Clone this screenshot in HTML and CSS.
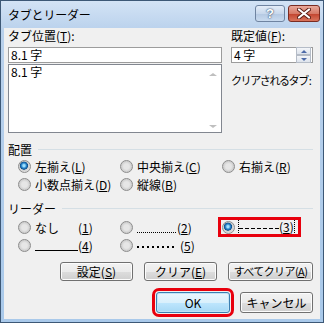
FILE: index.html
```html
<!DOCTYPE html>
<html lang="ja">
<head>
    <meta charset="UTF-8">
    <title>タブとリーダー</title>
    <link rel="stylesheet" href="styles.css">
</head>
<body>
    <div class="window">
        <div class="titlebar">
            <span class="title">タブとリーダー</span>
            <div class="caption-buttons">
                <span class="cap-btn help">?</span>
                <span class="cap-btn close">
                    <svg width="14" height="11" viewBox="0 0 14 11">
                        <path d="M2 1.5 L12 9.5 M12 1.5 L2 9.5" stroke="#5a1d14" stroke-width="4" stroke-linecap="round"/>
                        <path d="M2 1.5 L12 9.5 M12 1.5 L2 9.5" stroke="#fff" stroke-width="2.2" stroke-linecap="round"/>
                    </svg>
                </span>
            </div>
        </div>
        <div class="client">
            <div class="top">
                <div class="tab-col">
                    <div class="label">タブ位置(<u>T</u>):</div>
                    <div class="textbox">8.1 字</div>
                    <div class="listbox">
                        <div class="list-item">8.1 字</div>
                        <div class="scrollbar">
                            <span class="sarrow up"></span>
                            <span class="sarrow down"></span>
                        </div>
                    </div>
                </div>
                <div class="side-col">
                    <div class="label">既定値(<u>F</u>):</div>
                    <div class="textbox spin">
                        <span>4&nbsp;字</span>
                        <span class="spin-btns">
                            <span class="spin-btn"><span class="tri up"></span></span>
                            <span class="spin-btn"><span class="tri down"></span></span>
                        </span>
                    </div>
                    <div class="clear-label">クリアされるタブ :</div>
                </div>
            </div>

            <div class="group-head"><span>配置</span></div>
            <div class="radio-grid">
                <div class="opt"><span class="radio on"></span><span>左揃え(<u>L</u>)</span></div>
                <div class="opt"><span class="radio"></span><span>中央揃え(<u>C</u>)</span></div>
                <div class="opt"><span class="radio"></span><span>右揃え(<u>R</u>)</span></div>
                <div class="opt"><span class="radio"></span><span>小数点揃え(<u>D</u>)</span></div>
                <div class="opt"><span class="radio"></span><span>縦線(<u>B</u>)</span></div>
            </div>

            <div class="group-head leader-head"><span>リーダー</span></div>
            <div class="radio-grid">
                <div class="opt"><span class="radio"></span><span>なし<span class="lead blank"></span>(<u>1</u>)</span></div>
                <div class="opt"><span class="radio"></span><span><span class="lead dots"></span>(<u>2</u>)</span></div>
                <div class="opt marked"><span class="radio on"></span><span class="focus"><span class="lead dashes"></span>(<u>3</u>)</span></div>
                <div class="opt"><span class="radio"></span><span><span class="lead line"></span>(<u>4</u>)</span></div>
                <div class="opt"><span class="radio"></span><span><span class="lead bold-dots"></span>(<u>5</u>)</span></div>
            </div>

            <div class="btn-row">
                <button class="btn">設定(<u>S</u>)</button>
                <button class="btn">クリア(<u>E</u>)</button>
                <button class="btn wide">すべてクリア(<u>A</u>)</button>
            </div>
            <div class="btn-row ok-row">
                <button class="btn default">OK</button>
                <button class="btn">キャンセル</button>
            </div>
        </div>
    </div>
</body>
</html>
```

FILE: styles.css
```css
body {
    margin: 0;
    font-family: "Noto Sans CJK JP", "Liberation Sans", sans-serif;
    font-size: 12px;
    color: #000;
    white-space: nowrap;
}
.window {
    width: 324px;
    height: 323px;
    box-sizing: border-box;
    border: 1px solid #3d5876;
    background: linear-gradient(to bottom, #d3e3f5, #b9d1ec 30px, #a9c9ea);
    padding: 0 3px 3px 3px;
    display: flex;
    flex-direction: column;
}
.titlebar {
    height: 27px;
    display: flex;
    align-items: center;
    justify-content: space-between;
    padding-left: 4px;
    flex-shrink: 0;
}
.title {
    font-size: 12px;
    line-height: 14px;
    letter-spacing: -0.2px;
}
.caption-buttons {
    display: flex;
    gap: 3px;
    align-self: flex-start;
    margin-top: 4px;
}
.cap-btn {
    height: 17px;
    box-sizing: border-box;
    border-radius: 3px;
    display: flex;
    align-items: center;
    justify-content: center;
}
.help {
    width: 30px;
    border: 1px solid #6f84a1;
    background: linear-gradient(to bottom, #e4edf8, #c8d8ec 50%, #b4c8e2 51%, #c9dbef);
    color: #fff;
    font-family: "Liberation Sans", sans-serif;
    font-weight: bold;
    font-size: 13px;
    text-shadow: 0 0 2px #324b6c, 0 0 1px #324b6c;
}
.close {
    width: 32px;
    border: 1px solid #7a2c22;
    background: linear-gradient(to bottom, #e9a99b, #d67a67 50%, #c1432d 51%, #d9745c);
}
.client {
    flex: 1;
    background: #f0f0f0;
    padding: 0 7px 0 4px;
}
.top {
    display: flex;
    height: 105px;
}
.tab-col {
    width: 214px;
}
.side-col {
    margin-left: 9px;
    flex: 1;
    min-width: 0;
}
.label {
    line-height: 15px;
    margin-bottom: 4px;
}
.textbox {
    height: 16px;
    box-sizing: border-box;
    border: 1px solid #9c9c9c;
    background: #fff;
    padding-left: 2px;
    line-height: 14px;
}
.spin {
    display: flex;
    justify-content: space-between;
    align-items: center;
}
.spin-btns {
    display: flex;
    flex-direction: column;
    margin-right: 1px;
}
.spin-btn {
    width: 13px;
    height: 6px;
    border: 1px solid #b5bcc7;
    background: linear-gradient(to bottom, #f4f6f9, #dde3ec);
    display: flex;
    align-items: center;
    justify-content: center;
}
.tri {
    width: 0;
    height: 0;
    border-left: 3px solid transparent;
    border-right: 3px solid transparent;
}
.tri.up {
    border-bottom: 3px solid #4d6aa8;
}
.tri.down {
    border-top: 3px solid #4d6aa8;
}
.listbox {
    margin-top: 1px;
    height: 69px;
    box-sizing: border-box;
    border: 1px solid #828790;
    background: #fff;
    display: flex;
    justify-content: space-between;
}
.list-item {
    padding-left: 2px;
    line-height: 14px;
}
.scrollbar {
    width: 16px;
    display: flex;
    flex-direction: column;
    justify-content: space-between;
    align-items: center;
    padding: 8px 0 4px;
}
.sarrow {
    width: 0;
    height: 0;
    border-left: 4px solid transparent;
    border-right: 4px solid transparent;
}
.sarrow.up {
    border-bottom: 3px solid #bfbfbf;
}
.sarrow.down {
    border-top: 3px solid #bfbfbf;
}
.clear-label {
    margin-top: 10px;
    line-height: 15px;
    font-size: 11px;
    letter-spacing: -1.4px;
}
.group-head {
    display: flex;
    align-items: center;
    gap: 6px;
    margin-top: 9px;
    line-height: 15px;
}
.group-head::after {
    content: "";
    flex: 1;
    height: 1px;
    background: #d5dfe5;
}
.leader-head {
    margin-top: 8px;
    margin-bottom: 2px;
}
.radio-grid {
    display: grid;
    grid-template-columns: 102px 102px auto;
    padding-left: 10px;
}
.opt {
    height: 18px;
    display: flex;
    align-items: center;
    gap: 4px;
}
.radio {
    width: 13px;
    height: 13px;
    box-sizing: border-box;
    border-radius: 50%;
    border: 1px solid #8c8c8c;
    background: radial-gradient(circle, #e6e6e6 0 35%, #cfcfcf 65%, #f7f7f7 100%);
    flex-shrink: 0;
}
.radio.on {
    background: radial-gradient(circle at 45% 42%, #9ee0ff 0 1px, #2a86cc 2.5px, #0d4f8c 3.8px, #cfcfcf 4.3px, #f2f2f2 100%);
}
.lead {
    display: inline-block;
    width: 40px;
}
.lead.blank {
    width: 19px;
}
.lead.dots {
    height: 1px;
    background: repeating-linear-gradient(to right, #000 0 1px, transparent 1px 2px);
}
.lead.dashes {
    height: 1px;
    vertical-align: middle;
    background: repeating-linear-gradient(to right, #000 0 4px, transparent 4px 6px);
}
.lead.line {
    width: 43px;
    height: 1px;
    background: #000;
}
.lead.bold-dots {
    width: 38px;
    height: 2px;
    margin-right: 5px;
    vertical-align: middle;
    background: repeating-linear-gradient(to right, #000 0 2px, transparent 2px 5px);
}
.focus {
    outline: 1px dotted #000;
    outline-offset: 0;
    line-height: 14px;
}
.marked {
    margin-left: -3px;
    padding: 0 6px 0 3px;
    outline: 3px solid #e8000d;
    outline-offset: -2px;
    justify-self: start;
}
.btn-row {
    display: flex;
    justify-content: flex-end;
    gap: 11px;
    margin-top: 8px;
}
.ok-row {
    gap: 10px;
    margin-top: 11px;
}
.btn {
    width: 73px;
    height: 19px;
    padding: 0;
    font-family: inherit;
    font-size: 12px;
    line-height: 15px;
    color: #000;
    white-space: nowrap;
    border: 1px solid #707070;
    border-radius: 3px;
    background: linear-gradient(to bottom, #f2f2f2, #ebebeb 50%, #dddddd 51%, #cfcfcf);
    box-shadow: inset 0 0 0 1px #fcfcfc;
}
.btn.wide {
    width: 85px;
    font-size: 11px;
    letter-spacing: -0.6px;
}
.ok-row .btn {
    height: 21px;
}
.btn.default {
    width: 74px;
    border-color: #3c7fb1;
    background: linear-gradient(to bottom, #eaf6fd, #d9f0fc 50%, #bee6fd 51%, #a7d9f5);
    box-shadow: inset 0 0 0 1px #c0e4f7;
    outline: 3px solid #e8000d;
    outline-offset: 1px;
}
```
